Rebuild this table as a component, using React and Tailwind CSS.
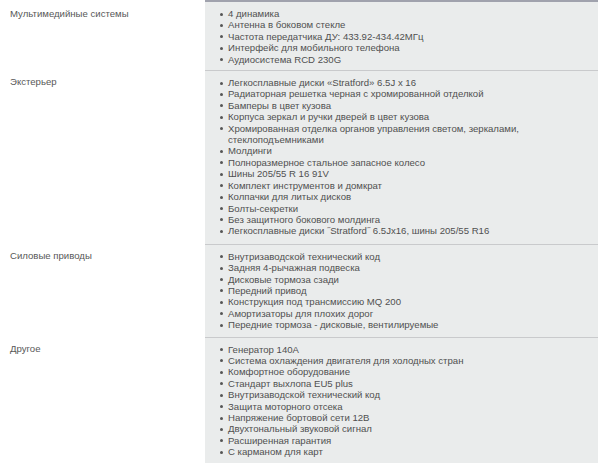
import React from "react";

const rows = [
  {
    label: "Мультимедийные системы",
    items: [
      "4 динамика",
      "Антенна в боковом стекле",
      "Частота передатчика ДУ: 433.92-434.42МГц",
      "Интерфейс для мобильного телефона",
      "Аудиосистема RCD 230G",
    ],
    cls: "border-t-2 border-t-[#a0a2ad] pt-[6px] pb-[5px]",
  },
  {
    label: "Экстерьер",
    items: [
      "Легкосплавные диски «Stratford» 6.5J x 16",
      "Радиаторная решетка черная с хромированной отделкой",
      "Бамперы в цвет кузова",
      "Корпуса зеркал и ручки дверей в цвет кузова",
      "Хромированная отделка органов управления светом, зеркалами, стеклоподъемниками",
      "Молдинги",
      "Полноразмерное стальное запасное колесо",
      "Шины 205/55 R 16 91V",
      "Комплект инструментов и домкрат",
      "Колпачки для литых дисков",
      "Болты-секретки",
      "Без защитного бокового молдинга",
      "Легкосплавные диски ˝Stratford˝ 6.5Jx16, шины 205/55 R16",
    ],
    cls: "border-t border-t-[#c9cacc] pt-[6px] pb-[7px]",
  },
  {
    label: "Силовые приводы",
    items: [
      "Внутризаводской технический код",
      "Задняя 4-рычажная подвеска",
      "Дисковые тормоза сзади",
      "Передний привод",
      "Конструкция под трансмиссию MQ 200",
      "Амортизаторы для плохих дорог",
      "Передние тормоза - дисковые, вентилируемые",
    ],
    cls: "border-t border-t-[#c9cacc] pt-[6px] pb-[6px]",
  },
  {
    label: "Другое",
    items: [
      "Генератор 140А",
      "Система охлаждения двигателя для холодных стран",
      "Комфортное оборудование",
      "Стандарт выхлопа EU5 plus",
      "Внутризаводской технический код",
      "Защита моторного отсека",
      "Напряжение бортовой сети 12В",
      "Двухтональный звуковой сигнал",
      "Расширенная гарантия",
      "С карманом для карт",
    ],
    cls: "border-t border-t-[#c9cacc] border-b-2 border-b-[#9ea0aa] pt-[6px] pb-[5px]",
  },
];

export default function App() {
  return (
    <div
      className="w-[600px] h-[463px] bg-white flex flex-col text-[9.6px] leading-[11.4px] text-[#505050]"
      style={{ fontFamily: '"Liberation Sans", Arial, sans-serif' }}
    >
      {rows.map((r, i) => (
        <div key={i} className="flex">
          <div className={`w-[205px] pl-[10px] text-[#585858] ${i === 0 ? "pt-[8px]" : "pt-[6px]"}`}>
            {r.label}
          </div>
          <div className={`w-[393px] bg-[#eaecec] pl-[15px] pr-[10px] ${r.cls}`}>
            <ul className="flex flex-col">
              {r.items.map((t, j) => (
                <li key={j} className="flex">
                  <span className="w-[8px] shrink-0 flex pt-[4.5px]">
                    <span className="w-[3px] h-[3px] rounded-full bg-[#555]" />
                  </span>
                  <span>{t}</span>
                </li>
              ))}
            </ul>
          </div>
        </div>
      ))}
    </div>
  );
}
